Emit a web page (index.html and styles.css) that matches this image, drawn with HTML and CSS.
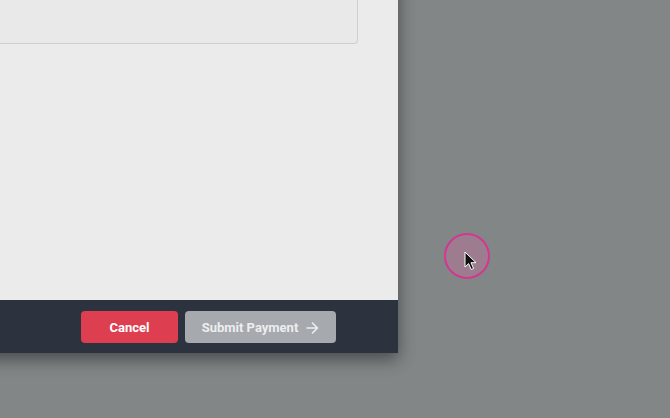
FILE: index.html
```html
<!DOCTYPE html>
<html lang="en">
<head>
    <meta charset="UTF-8">
    <meta name="viewport" content="width=device-width, initial-scale=1.0">
    <title>Payment</title>
    <link rel="stylesheet" href="styles.css">
</head>
<body>
    <div class="modal">
        <div class="modal-body">
            <div class="field-box"></div>
        </div>
        <div class="modal-footer">
            <button class="btn btn-cancel">Cancel</button>
            <button class="btn btn-submit" disabled>
                Submit Payment
                <svg class="arrow" width="13" height="12" viewBox="0 0 13 12" fill="none" stroke="currentColor" stroke-width="1.6" stroke-linecap="round" stroke-linejoin="round">
                    <path d="M1 6h10.5M6.5 1l5 5-5 5"/>
                </svg>
            </button>
        </div>
    </div>
    <div class="cursor-ring">
        <svg class="pointer" width="14" height="20" viewBox="0 0 14 20">
            <path d="M1 1v15l3.6-3.4 2.6 5.9 2.4-1-2.6-5.8H12z" fill="#111" stroke="#fff" stroke-width="1"/>
        </svg>
    </div>
</body>
</html>
```
FILE: styles.css
```css
html, body {
    margin: 0;
    height: 100%;
    overflow: hidden;
}
body {
    font-family: Roboto, 'Liberation Sans', sans-serif;
    background: #828686;
    position: relative;
}
.modal {
    position: absolute;
    left: -242px;
    top: -300px;
    width: 640px;
    display: flex;
    flex-direction: column;
    box-shadow: 0 6px 16px rgba(0, 0, 0, 0.45);
}
.modal-body {
    background: #ebebeb;
    height: 600px;
    padding: 0 40px 0 20px;
}
.field-box {
    height: 343px;
    border: 1px solid #cfcfcf;
    border-top: none;
    border-radius: 0 0 4px 4px;
    background: #e9e9e9;
}
.modal-footer {
    background: #2d333e;
    display: flex;
    justify-content: flex-end;
    gap: 7px;
    padding: 11px 62px 10px 0;
}
.btn {
    height: 32px;
    border: none;
    border-radius: 4px;
    font-family: Roboto, 'Liberation Sans', sans-serif;
    font-size: 13px;
    font-weight: bold;
    color: #fff;
    display: flex;
    align-items: center;
    justify-content: center;
    gap: 8px;
}
.btn-cancel {
    width: 97px;
    background: #de3f50;
}
.btn-submit {
    width: 151px;
    background: #a6a9ae;
    color: #eceef0;
}
.arrow {
    margin-top: 1px;
}
.cursor-ring {
    position: absolute;
    left: 444px;
    top: 233px;
    width: 42px;
    height: 42px;
    border: 2px solid #d3378f;
    border-radius: 50%;
    background: rgba(200, 110, 160, 0.4);
}
.pointer {
    position: absolute;
    left: 18px;
    top: 16px;
}
```
